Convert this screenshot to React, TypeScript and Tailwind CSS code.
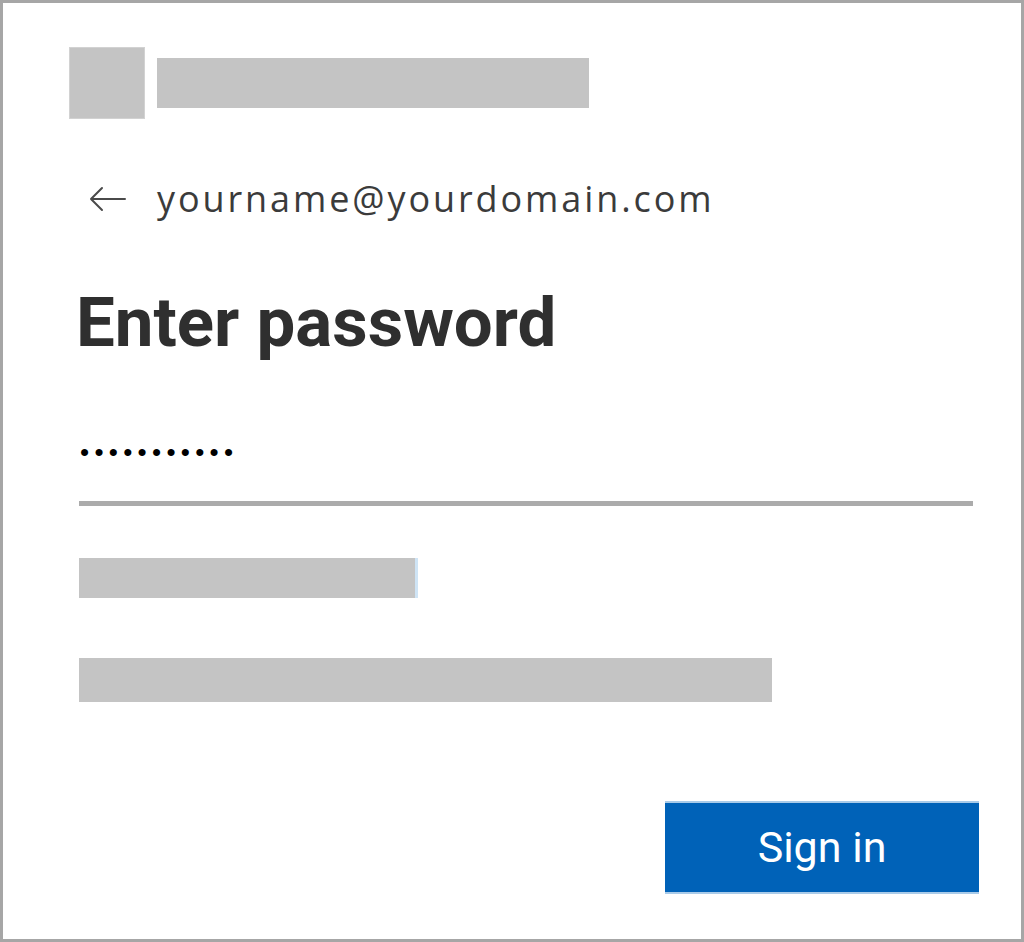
import React from 'react';

function BackArrow() {
  return (
    <svg width="40" height="28" viewBox="0 0 40 28" fill="none" className="shrink-0">
      <path d="M38 14H4M15 3L4 14l11 11" stroke="#4a4a4a" strokeWidth="2" strokeLinecap="round" strokeLinejoin="round" />
    </svg>
  );
}

export default function App() {
  return (
    <div className="w-[1024px] h-[942px] bg-white border-[3px] border-[#a6a6a6] box-border">
      <div className="flex flex-col pl-[73px]">
        <div className="flex items-center mt-[44px] -ml-[7px]">
          <div className="w-[76px] h-[72px] bg-[#c4c4c4] border border-[#d2d2d2]" />
          <div className="w-[432px] h-[50px] bg-[#c4c4c4] ml-[12px]" />
        </div>

        <div className="flex items-center mt-[58px] ml-[11px]">
          <BackArrow />
          <span className="ml-[30px] text-[36px] leading-[44px] tracking-[2.9px] text-[#3b3b3b]" style={{ fontFamily: '"Open Sans", "Noto Sans", sans-serif' }}>
            yourname@yourdomain.com
          </span>
        </div>

        <h1 className="mt-[62px] text-[69px] leading-[80px] font-bold text-[#2f2f2f]" style={{ fontFamily: 'Roboto, "Liberation Sans", sans-serif' }}>
          Enter password
        </h1>

        <div className="mt-[69px] ml-[4px] h-[40px] flex items-center">
          <span className="text-[26px] leading-[40px] tracking-[5.3px] text-black" style={{ fontFamily: '"Liberation Sans", Arial, sans-serif' }}>
            •••••••••••
          </span>
        </div>
        <div className="mt-[29px] ml-[3px] w-[894px] h-[5px] bg-[#ababab]" />

        <div className="mt-[52px] ml-[3px] w-[339px] h-[40px] bg-[#c4c4c4] border-r-[3px] border-[#cfe4f5]" />
        <div className="mt-[60px] ml-[3px] w-[693px] h-[44px] bg-[#c4c4c4]" />

        <div className="flex justify-end mt-[99px] pr-[42px]">
          <button className="w-[314px] h-[93px] bg-[#0062b8] text-white text-[43px] border-t-[2px] border-b-[2px] border-[#a9cbe9]" style={{ fontFamily: 'Roboto, "Liberation Sans", sans-serif' }}>
            Sign in
          </button>
        </div>
      </div>
    </div>
  );
}
